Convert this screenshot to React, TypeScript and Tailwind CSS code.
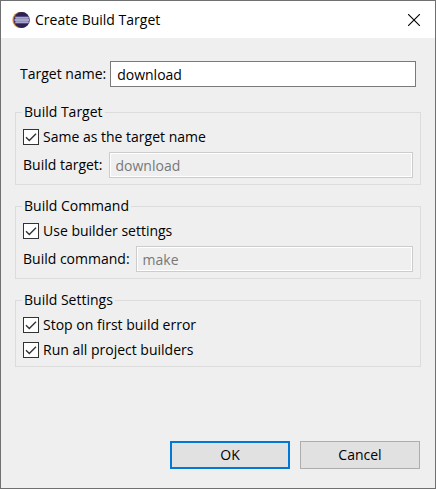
import { useState, type ReactNode } from "react";

function EclipseLogo() {
  return (
    <svg viewBox="0 0 18 18" className="size-[18px] shrink-0" aria-hidden="true">
      <circle cx="8.3" cy="9" r="8" fill="#f0a04a" />
      <circle cx="9.2" cy="9" r="8" fill="#8a5a48" />
      <circle cx="9.9" cy="9" r="7.9" fill="#2c2255" />
      <path d="M3 6.5h14M2.2 9h15.6M3 11.5h14" stroke="#7672ac" strokeWidth="2.2" />
      <path d="M3.6 7h12.8M3 9h14M3.6 11h12.8" stroke="#dcdcf0" strokeWidth="1" />
    </svg>
  );
}

function CheckRow({ label }: { label: string }) {
  const [checked, setChecked] = useState(true);
  return (
    <label className="flex h-[25px] items-center gap-1">
      <span className="grid size-4 shrink-0">
        <input
          type="checkbox"
          checked={checked}
          onChange={(e) => setChecked(e.target.checked)}
          className="col-start-1 row-start-1 size-4 appearance-none border border-[#333333] bg-white"
        />
        {checked && (
          <svg viewBox="0 0 16 16" className="pointer-events-none col-start-1 row-start-1 size-4" aria-hidden="true">
            <path d="M3 8.2l3.3 3.3L13 4.8" fill="none" stroke="#333333" strokeWidth="1.4" />
          </svg>
        )}
      </span>
      {label}
    </label>
  );
}

function Group({ title, children }: { title: string; children: ReactNode }) {
  return (
    <fieldset className="min-w-0 border border-[#dcdcdc] px-[7px]">
      <legend className="-ml-px h-5 px-0.5 leading-5">{title}</legend>
      {children}
    </fieldset>
  );
}

function DisabledField({ id, label, value }: { id: string; label: string; value: string }) {
  return (
    <div className="mt-[3px] mb-1.5 flex items-center gap-1.5">
      <label htmlFor={id} className="shrink-0">
        {label}
      </label>
      <input
        id={id}
        disabled
        value={value}
        className="h-[26px] min-w-0 flex-1 border border-[#cccccc] bg-[#efefef] px-1.5 text-[#787878] shadow-[inset_0_0_0_1px_#ffffff]"
      />
    </div>
  );
}

export default function App() {
  const [name, setName] = useState("download");
  return (
    <div className="flex min-h-screen flex-col border border-[#707070] bg-[#efefef] font-['Open_Sans','Noto_Sans',sans-serif] text-[14px] leading-5 text-black">
      <header className="flex h-[37px] items-center bg-white pr-[15px] pl-[11px]">
        <EclipseLogo />
        <h1 className="ml-[5px] flex-1">Create Build Target</h1>
        <button type="button" aria-label="Close">
          <svg viewBox="0 0 12 12" className="size-3" aria-hidden="true">
            <path d="M0 0l12 12M12 0L0 12" stroke="#000000" strokeWidth="1.1" />
          </svg>
        </button>
      </header>
      <main className="flex flex-1 flex-col px-3.5 pt-[23px] pb-[19px]">
        <div className="mb-[15px] flex items-center gap-1 pr-[5px] pl-[5px]">
          <label htmlFor="target-name" className="shrink-0">
            Target name:
          </label>
          <input
            id="target-name"
            value={name}
            onChange={(e) => setName(e.target.value)}
            className="h-[26px] min-w-0 flex-1 border border-[#7a7a7a] bg-white px-1.5 outline-none"
          />
        </div>
        <div className="flex flex-col gap-[11px]">
          <Group title="Build Target">
            <div className="pt-0.5">
              <CheckRow label="Same as the target name" />
              <DisabledField id="build-target" label="Build target:" value={name} />
            </div>
          </Group>
          <Group title="Build Command">
            <div className="pt-0.5">
              <CheckRow label="Use builder settings" />
              <DisabledField id="build-command" label="Build command:" value="make" />
            </div>
          </Group>
          <Group title="Build Settings">
            <div className="pt-0.5 pb-1">
              <CheckRow label="Stop on first build error" />
              <CheckRow label="Run all project builders" />
            </div>
          </Group>
        </div>
        <div className="mt-auto flex justify-end gap-2.5 pr-px">
          <button type="button" className="h-7 w-[120px] border-2 border-[#0078d7] bg-[#e1e1e1]">
            OK
          </button>
          <button type="button" className="h-7 w-[120px] border border-[#adadad] bg-[#e1e1e1]">
            Cancel
          </button>
        </div>
      </main>
    </div>
  );
}
